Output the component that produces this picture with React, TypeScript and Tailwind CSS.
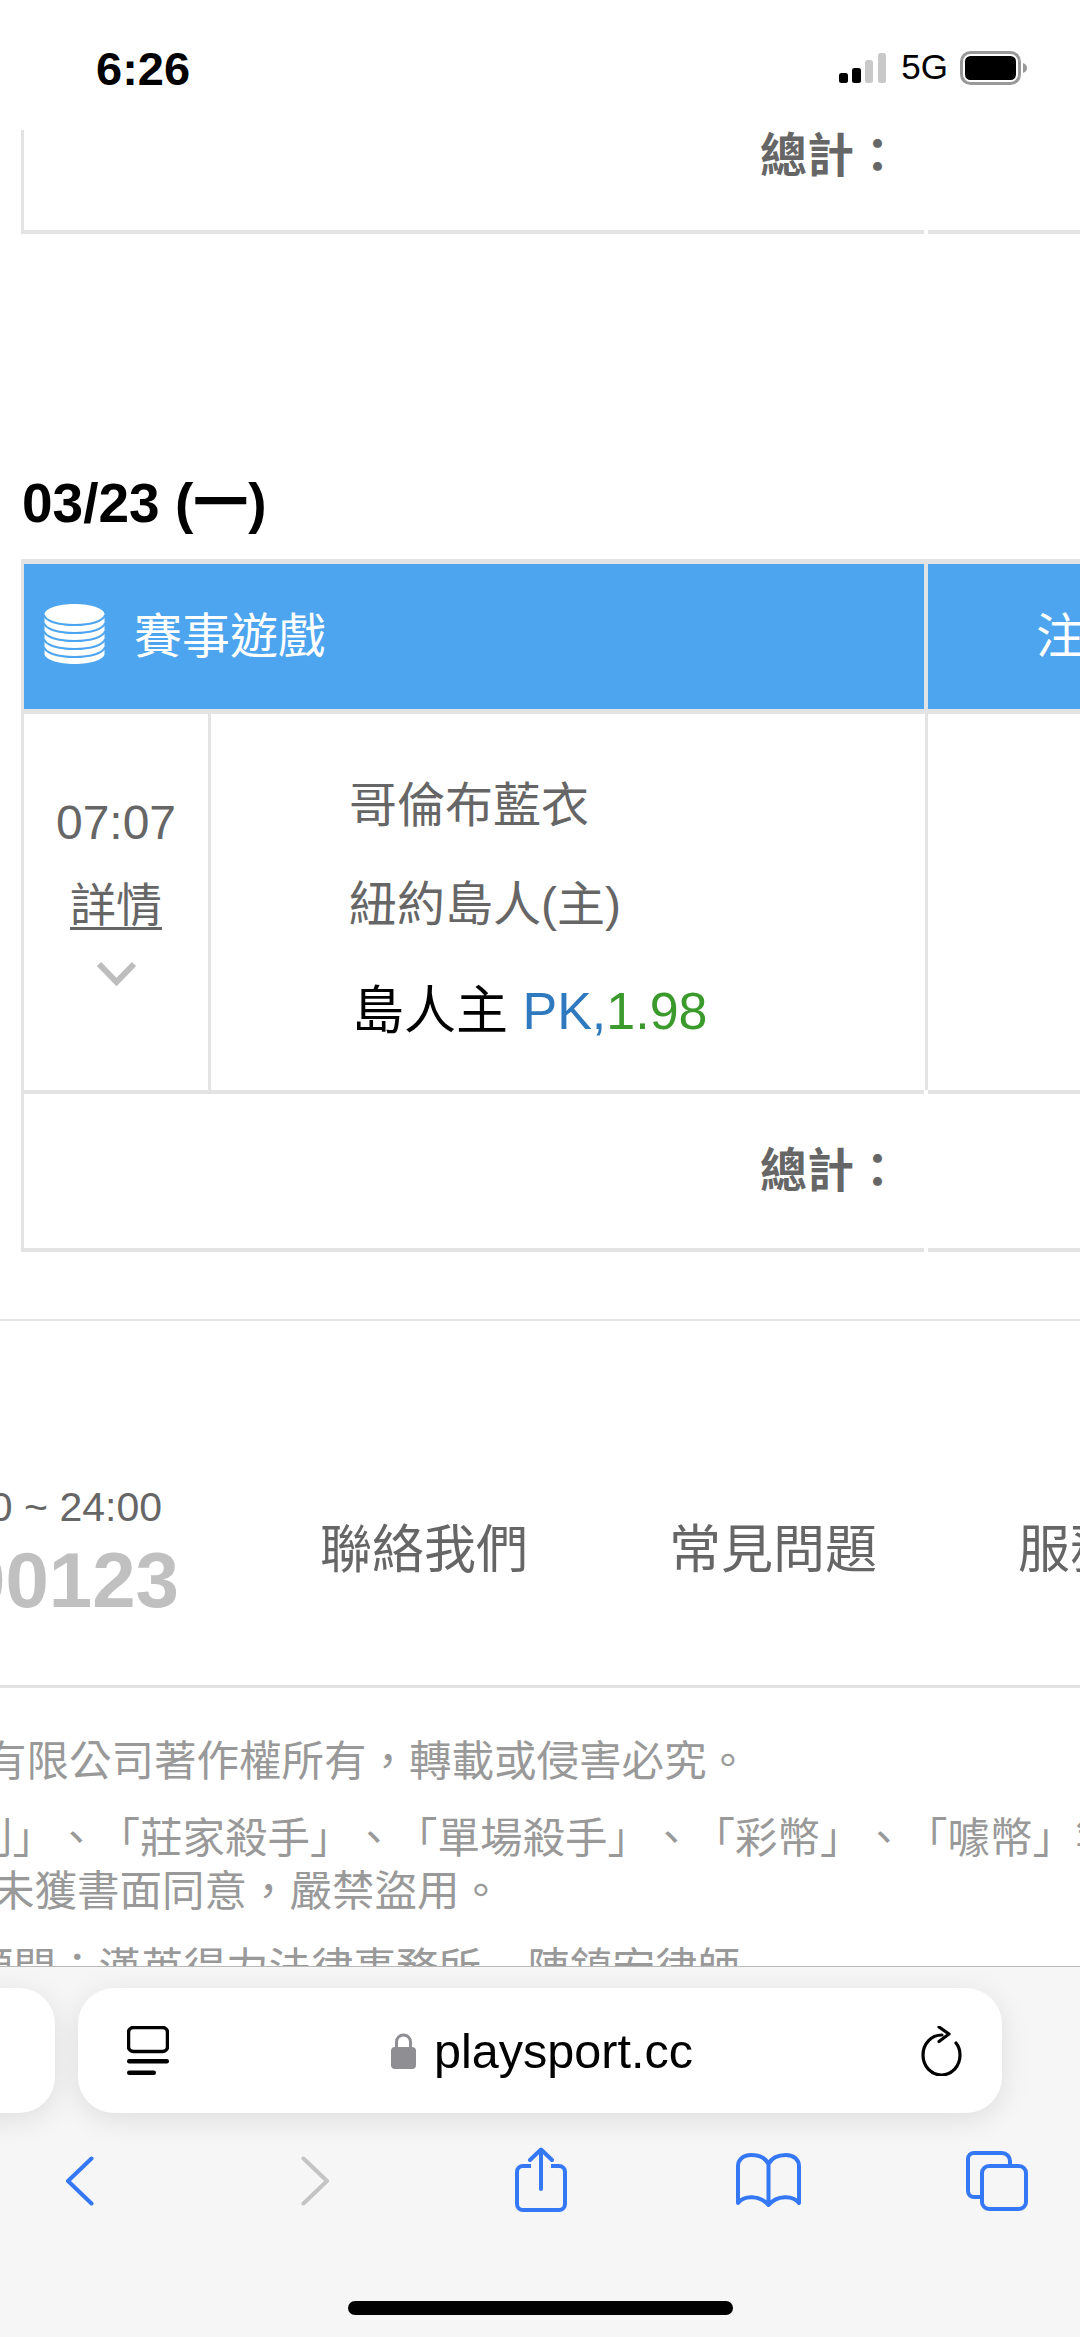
import React from 'react';

const sans = "font-['Liberation_Sans','Noto_Sans_CJK_TC',sans-serif] [text-spacing-trim:space-all]";

function TotalRow({ top }: { top?: boolean }) {
  return (
    <div className={`flex w-[1500px] ${top ? 'h-[104px]' : 'h-[162px]'}`}>
      <div
        className={`w-[903px] shrink-0 border-l-[3px] border-b-[4px] border-[#e3e3e3] flex justify-end pr-[23px] text-[47px] font-bold text-[#666] ${
          top ? 'items-start leading-[52px]' : 'border-t-[4px] items-center leading-[48px]'
        }`}
      >
        總計：
      </div>
      <div className={`ml-[4px] flex-1 border-b-[4px] border-[#e3e3e3] ${top ? '' : 'border-t-[4px]'}`} />
    </div>
  );
}

function CoinStack() {
  return (
    <svg viewBox="0 0 61 60" className="w-[61px] h-[60px] -mt-[5px]">
      <path d="M0.5 10.5 C0.5 4.5 14 0 30.5 0 S60.5 4.5 60.5 10.5 V49.5 C60.5 55.5 47 60 30.5 60 S0.5 55.5 0.5 49.5 Z" fill="#fff" />
      {[11, 19, 27, 35, 43].map(y => (
        <path key={y} d={`M0 ${y} C1 ${y + 6} 14 ${y + 10} 30.5 ${y + 10} S60 ${y + 6} 61 ${y}`} fill="none" stroke="#4ca5ee" strokeWidth="2" />
      ))}
    </svg>
  );
}

function StatusBar() {
  return (
    <div className="h-[130px] shrink-0 bg-white flex items-start justify-between pt-[46px] pl-[96px] pr-[52px]">
      <span className="text-[47px] leading-[46px] font-bold text-black">6:26</span>
      <div className="flex items-start mt-[6px]">
        <svg viewBox="0 0 47 30" className="w-[47px] h-[30px] mt-[1px]">
          <rect x="0" y="20" width="9" height="10" rx="2.5" fill="#000" />
          <rect x="13" y="15" width="9" height="15" rx="2.5" fill="#000" />
          <rect x="26" y="7" width="8" height="23" rx="2.5" fill="#c9c9c9" />
          <rect x="39" y="0" width="8" height="30" rx="2.5" fill="#c9c9c9" />
        </svg>
        <span className="ml-[15px] text-[35px] leading-[30px] text-black">5G</span>
        <svg viewBox="0 0 68 34" className="ml-[12px] -mt-[1px] w-[68px] h-[34px]">
          <rect x="1.5" y="1.5" width="58" height="31" rx="9" fill="none" stroke="#999" strokeWidth="3" />
          <rect x="5" y="5" width="51" height="24" rx="5.5" fill="#000" />
          <path d="M63 12 c3 1 4 3 4 5 s-1 4 -4 5z" fill="#999" />
        </svg>
      </div>
    </div>
  );
}

function BetTable() {
  return (
    <div className="w-[1500px]">
      {/* Header */}
      <div className="flex h-[155px] border-y-[5px] border-[#e3e3e3] bg-[#dfe3e6]">
        <div className="w-[903px] shrink-0 border-l-[3px] border-[#e3e3e3] bg-[#4ca5ee] flex items-center pl-[20px] gap-[29px] text-[48px] text-white">
          <CoinStack />
          <span>賽事遊戲</span>
        </div>
        <div className="flex-1 ml-[4px] bg-[#4ca5ee] pl-[108px] flex items-center text-[48px] text-white">注</div>
      </div>

      {/* Row */}
      <div className="flex h-[376px]">
        <div className="w-[190px] shrink-0 border-l-[3px] border-r-[3px] border-[#e3e3e3] flex flex-col items-center text-[#666]">
          <span className="mt-[81px] text-[48px] leading-[56px]">07:07</span>
          <span className="mt-[26px] text-[46px] leading-[56px] underline underline-offset-[6px] decoration-[3px]">詳情</span>
          <svg viewBox="0 0 41 25" className="mt-[28px] w-[41px] h-[25px]">
            <path d="M3 3 L20.5 21 L38 3" fill="none" stroke="#bdbdbd" strokeWidth="6" />
          </svg>
        </div>
        <div className="w-[717px] shrink-0 border-r-[3px] border-[#e3e3e3] pl-[138px] text-[48px] text-[#666]">
          <div className="mt-[60px] leading-[64px]">哥倫布藍衣</div>
          <div className="mt-[35px] leading-[64px]">紐約島人(主)</div>
          <div className="mt-[42px] ml-[3px] leading-[64px] text-[52px] text-black whitespace-nowrap">
            島人主 <span className="text-[#2f7abf]">PK,</span><span className="text-[#3b9a2c]">1.98</span>
          </div>
        </div>
      </div>

      <TotalRow />
    </div>
  );
}

function Footer() {
  return (
    <div className="flex-1 overflow-hidden">
      <div className="mt-[67px] h-[2px] bg-[#e5e5e5]" />
      <div className="flex h-[364px] gap-[141px] whitespace-nowrap">
        <div className="w-[179px] shrink-0 flex flex-col items-end pt-[162px]">
          <span className="pr-[17px] text-[41px] leading-[48px] text-[#666]">09:00 ~ 24:00</span>
          <span className="mt-[7px] text-[78px] leading-[84px] font-bold text-[#c0c0c0]">0800-000123</span>
        </div>
        {['聯絡我們', '常見問題', '服務條款'].map(label => (
          <span key={label} className="pt-[197px] text-[52px] leading-[64px] text-[#666] shrink-0">{label}</span>
        ))}
      </div>
      <div className="h-[3px] bg-[#e3e3e3]" />
      <div className="pt-[47px] text-[42.5px] leading-[53px] text-[#999] whitespace-nowrap">
        <p className="-ml-[16px]">有限公司著作權所有，轉載或侵害必究。</p>
        <p className="mt-[24px] -ml-[30px]">利」、「莊家殺手」、「單場殺手」、「彩幣」、「噱幣」等</p>
        <p className="-ml-[8px]">未獲書面同意，嚴禁盜用。</p>
        <p className="mt-[24px] -ml-[29px]">顧問：漢英得力法律事務所　<span className="ml-[4px]">陳鎮宏律師</span></p>
      </div>
    </div>
  );
}

function SafariBar() {
  return (
    <div className="h-[371px] shrink-0 bg-[#f6f6f6] border-t border-[#b8b8b8] flex flex-col">
      {/* Address cards */}
      <div className="mt-[21px] h-[125px] flex gap-[23px] -ml-[200px] shrink-0">
        <div className="w-[255px] rounded-[36px] bg-white shadow-[0_6px_30px_rgba(0,0,0,0.1)]" />
        <div className="w-[924px] rounded-[36px] bg-white shadow-[0_6px_30px_rgba(0,0,0,0.1)] flex items-center pl-[49px] pr-[40px]">
          <svg viewBox="0 0 42 49" className="w-[42px] h-[49px]">
            <rect x="1.5" y="1.5" width="39" height="24" rx="5" fill="none" stroke="#000" strokeWidth="3.5" />
            <rect x="0" y="33" width="42" height="4.5" rx="2.2" fill="#000" />
            <rect x="0" y="44.5" width="29" height="4.5" rx="2.2" fill="#000" />
          </svg>
          <div className="flex-1 flex items-center justify-center pr-[6px]">
            <svg viewBox="0 0 25 36" className="w-[25px] h-[36px]">
              <path d="M5.5 16 V9 a7 7 0 0 1 14 0 V16" fill="none" stroke="#8e8e93" strokeWidth="3" />
              <rect x="0" y="14" width="25" height="22" rx="4" fill="#8e8e93" />
            </svg>
            <span className="ml-[18px] text-[48.5px] leading-[56px] text-black">playsport.cc</span>
          </div>
          <svg viewBox="0 0 41 50" className="w-[41px] h-[50px]">
            <path d="M21 9 C10 9 2 18 2 29 C2 40 10 49 20.5 49 C31 49 39 40 39 29 C39 24 37.5 20 35 17" fill="none" stroke="#000" strokeWidth="3.2" strokeLinecap="round" />
            <path d="M18 1 L28 8 L18 15.5" fill="none" stroke="#000" strokeWidth="3.2" strokeLinecap="round" strokeLinejoin="round" />
          </svg>
        </div>
      </div>

      {/* Toolbar */}
      <div className="h-[80px] mt-[34px] flex items-start shrink-0 pl-[65px]">
        <svg viewBox="0 0 29 50" className="w-[29px] h-[50px] mt-[9px]">
          <path d="M26.5 2.5 L3 25 L26.5 47.5" fill="none" stroke="#3478f6" strokeWidth="4" strokeLinecap="round" strokeLinejoin="round" />
        </svg>
        <svg viewBox="0 0 29 50" className="ml-[207px] w-[29px] h-[50px] mt-[9px]">
          <path d="M2.5 2.5 L26 25 L2.5 47.5" fill="none" stroke="#c4c4c4" strokeWidth="4" strokeLinecap="round" strokeLinejoin="round" />
        </svg>
        <svg viewBox="0 0 52 65" className="ml-[185px] w-[52px] h-[65px]">
          <path d="M16 19 H8 a6 6 0 0 0 -6 6 V57 a6 6 0 0 0 6 6 H44 a6 6 0 0 0 6 -6 V25 a6 6 0 0 0 -6 -6 H36" fill="none" stroke="#3478f6" strokeWidth="4" />
          <path d="M26 42 V3 M15 13 L26 2.5 L37 13" fill="none" stroke="#3478f6" strokeWidth="4" strokeLinecap="round" strokeLinejoin="round" />
        </svg>
        <svg viewBox="0 0 65 54" className="ml-[169px] w-[65px] h-[54px] mt-[6px]">
          <path d="M32.5 11 C29 4 23 2 15 2 C7 2 2 7 2 13 V50 C8 42 24 42 32.5 52 C41 42 57 42 63 50 V13 C63 7 58 2 50 2 C42 2 36 4 32.5 11 Z M32.5 11 V50" fill="none" stroke="#3478f6" strokeWidth="4" strokeLinejoin="round" />
        </svg>
        <svg viewBox="0 0 62 60" className="ml-[165px] w-[62px] h-[60px] mt-[4px]">
          <path d="M14 46 H8 a6 6 0 0 1 -6 -6 V8 a6 6 0 0 1 6 -6 H36 a8 8 0 0 1 8 8 V14" fill="none" stroke="#3478f6" strokeWidth="4" />
          <rect x="16" y="15" width="44" height="43" rx="7" fill="none" stroke="#3478f6" strokeWidth="4" />
        </svg>
      </div>

      {/* Home indicator */}
      <div className="mt-[74px] mx-auto w-[385px] h-[14px] rounded-full bg-black shrink-0" />
    </div>
  );
}

export default function App() {
  return (
    <div className={`w-[1080px] h-[2337px] overflow-hidden bg-white flex flex-col ${sans}`}>
      <StatusBar />
      <div className="flex-1 overflow-hidden flex flex-col">
        <div className="pl-[21px]">
          <TotalRow top />
        </div>
        <div className="pl-[22px] mt-[239px] h-[86px] text-[55px] leading-[60px] font-bold text-black">03/23 (一)</div>
        <div className="pl-[21px]">
          <BetTable />
        </div>
        <Footer />
      </div>
      <SafariBar />
    </div>
  );
}
